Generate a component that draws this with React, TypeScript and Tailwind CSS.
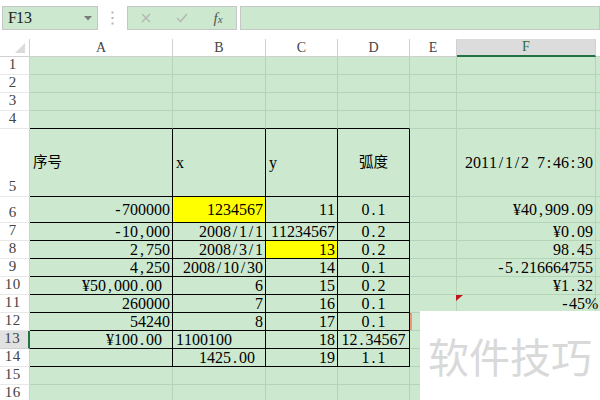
import React from 'react';

type Align = 'l' | 'r' | 'c';
interface ICell {
    t?: string;
    a?: Align;
    y?: boolean;
    pad?: boolean;
    zh?: boolean;
    note?: boolean;
    mark?: boolean;
}
interface IRow {
    n: number;
    h: string;
    cells: ICell[];
    sel?: boolean;
}

// SimSun-like look: serif glyphs in fixed 8px slots
const serif = "[font-family:'Liberation_Serif','Noto_Sans_CJK_SC',serif]";
const colW = ['w-[143px]', 'w-[93px]', 'w-[72px]', 'w-[72px]', 'w-[47px]', 'w-[139px]'];
const letters = ['A', 'B', 'C', 'D', 'E', 'F'];

const rows: IRow[] = [
    { n: 1, h: 'h-[18px]', cells: [] },
    { n: 2, h: 'h-[18px]', cells: [] },
    { n: 3, h: 'h-[18px]', cells: [] },
    { n: 4, h: 'h-[18px]', cells: [] },
    {
        n: 5,
        h: 'h-[68px]',
        cells: [
            { t: '序号', a: 'l', zh: true },
            { t: 'x', a: 'l' },
            { t: 'y', a: 'l' },
            { t: '弧度', a: 'c', zh: true },
            {},
            { t: '2011/1/2 7:46:30', a: 'r' },
        ],
    },
    {
        n: 6,
        h: 'h-[26px]',
        cells: [{ t: '-700000' }, { t: '1234567', y: true }, { t: '11' }, { t: '0.1', a: 'c' }, {}, { t: '¥40,909.09' }],
    },
    {
        n: 7,
        h: 'h-[18px]',
        cells: [{ t: '-10,000' }, { t: '2008/1/1' }, { t: '11234567' }, { t: '0.2', a: 'c' }, {}, { t: '¥0.09' }],
    },
    {
        n: 8,
        h: 'h-[18px]',
        cells: [{ t: '2,750' }, { t: '2008/3/1' }, { t: '13', y: true }, { t: '0.2', a: 'c' }, {}, { t: '98.45' }],
    },
    {
        n: 9,
        h: 'h-[18px]',
        cells: [{ t: '4,250' }, { t: '2008/10/30' }, { t: '14' }, { t: '0.1', a: 'c' }, {}, { t: '-5.216664755' }],
    },
    {
        n: 10,
        h: 'h-[18px]',
        cells: [{ t: '¥50,000.00', pad: true }, { t: '6' }, { t: '15' }, { t: '0.2', a: 'c' }, {}, { t: '¥1.32' }],
    },
    {
        n: 11,
        h: 'h-[18px]',
        cells: [{ t: '260000' }, { t: '7' }, { t: '16' }, { t: '0.1', a: 'c' }, {}, { t: '-45%', note: true }],
    },
    {
        n: 12,
        h: 'h-[18px]',
        cells: [{ t: '54240' }, { t: '8' }, { t: '17' }, { t: '0.1', a: 'c' }, { mark: true }, {}],
    },
    {
        n: 13,
        h: 'h-[18px]',
        sel: true,
        cells: [{ t: '¥100.00', pad: true }, { t: '1100100', a: 'l' }, { t: '18' }, { t: '12.34567', a: 'c' }, {}, {}],
    },
    {
        n: 14,
        h: 'h-[18px]',
        cells: [{}, { t: '1425.00', pad: true }, { t: '19' }, { t: '1.1', a: 'c' }, {}, {}],
    },
    { n: 15, h: 'h-[18px]', cells: [] },
    { n: 16, h: 'h-[18px]', cells: [] },
];

function Mono({ t }: { t: string }) {
    return (
        <span className="inline-flex">
            {t.split('').map((ch, i) => (
                <span key={i} className="inline-block w-[8px] text-center">
                    {ch === ' ' ? '\u00a0' : ch}
                </span>
            ))}
        </span>
    );
}

function Cell({ c, idx, rowNum }: { c: ICell; idx: number; rowNum: number }) {
    const inTable = idx < 4 && rowNum >= 5 && rowNum <= 14;
    const topEdge = idx < 4 && rowNum === 4;
    const right = inTable ? 'border-r-black' : 'border-r-[#b3d4b7]';
    const bottom = inTable || topEdge ? 'border-b-black' : 'border-b-[#b3d4b7]';
    let align = 'justify-end pr-[2px]';
    if (c.a === 'l') align = 'justify-start pl-[3px]';
    if (c.a === 'c') align = 'justify-center';
    if (c.pad) align = 'justify-end pr-[10px]';
    return (
        <div
            className={`${colW[idx]} relative h-full shrink-0 border-r border-b ${right} ${bottom} ${
                c.y ? 'bg-[#ffff00]' : ''
            } flex items-center ${align} whitespace-nowrap`}
        >
            {c.t && (c.zh ? <span className="text-[14.5px]">{c.t}</span> : <Mono t={c.t} />)}
            {c.note && (
                <svg className="absolute left-[-1px] top-0" width="7" height="7" viewBox="0 0 7 7">
                    <polygon points="0,0 7,0 0,6" fill="#c0161b" />
                </svg>
            )}
            {c.mark && <div className="absolute left-0 top-0 h-[17px] w-[2px] bg-[#f29477]" />}
        </div>
    );
}

function Toolbar() {
    return (
        <div className="flex h-[39px] items-start bg-white pl-[2px] pt-[6px]">
            <div className="flex h-[24px] w-[100px] items-center justify-between border border-[#c6c6c6] bg-[#cce8cf] pl-[5px] pr-[5px] text-[#222]">
                <Mono t="F13" />
                <svg width="8" height="5" viewBox="0 0 8 5">
                    <polygon points="0,0 8,0 4,4.5" fill="#7a7a7a" />
                </svg>
            </div>
            <div className="flex h-[24px] w-[31px] items-center justify-center">
                <svg width="3" height="14" viewBox="0 0 3 14">
                    <rect x="0.5" y="0.5" width="2" height="2" fill="#b5b5b5" />
                    <rect x="0.5" y="6" width="2" height="2" fill="#b5b5b5" />
                    <rect x="0.5" y="11.5" width="2" height="2" fill="#b5b5b5" />
                </svg>
            </div>
            <div className="flex h-[24px] w-[110px] items-center border border-[#c6c6c6] bg-[#cce8cf]">
                <div className="flex w-[36px] justify-center">
                    <svg width="10" height="10" viewBox="0 0 10 10">
                        <path d="M1 1 L9 9 M9 1 L1 9" stroke="#b3b3b3" strokeWidth="1.3" />
                    </svg>
                </div>
                <div className="flex w-[36px] justify-center">
                    <svg width="12" height="10" viewBox="0 0 12 10">
                        <path d="M1 5 L4.5 8.5 L11 1" stroke="#b3b3b3" strokeWidth="1.3" fill="none" />
                    </svg>
                </div>
                <div className="flex w-[36px] justify-center text-[15px] italic text-[#555]">
                    <span>
                        f<span className="text-[11px]">x</span>
                    </span>
                </div>
            </div>
            <div className="ml-[3px] h-[24px] w-[360px] shrink-0 border border-[#c6c6c6] bg-[#cce8cf]" />
        </div>
    );
}

function Header() {
    return (
        <div className="flex h-[18px] bg-white text-[14px] text-[#444]">
            <div className="relative h-full w-[30px] shrink-0 border-r border-b border-[#d0d0d0]">
                <svg className="absolute left-[15px] top-[4px]" width="10" height="10" viewBox="0 0 10 10">
                    <polygon points="10,0 10,10 0,10" fill="#dadada" />
                </svg>
            </div>
            {letters.map((l, i) =>
                l === 'F' ? (
                    <div
                        key={l}
                        className={`${colW[i]} flex h-full shrink-0 items-center justify-center border-r border-b-2 border-r-[#d0d0d0] border-b-[#217346] bg-[#dcdcdc] text-[#2e6b45]`}
                    >
                        {l}
                    </div>
                ) : (
                    <div
                        key={l}
                        className={`${colW[i]} flex h-full shrink-0 items-center justify-center border-r border-b border-[#d0d0d0]`}
                    >
                        {l}
                    </div>
                )
            )}
            <div className="h-full flex-1 border-b border-[#d0d0d0]" />
        </div>
    );
}

export default function App() {
    return (
        <div className={`relative h-[400px] w-[600px] overflow-hidden bg-white text-[16px] leading-none text-black ${serif}`}>
            <Toolbar />
            <Header />
            {rows.map((r) => (
                <div key={r.n} className={`flex ${r.h}`}>
                    <div
                        className={`flex h-full w-[30px] shrink-0 items-end justify-center pb-[2px] pr-[4px] text-[15px] text-[#444] ${
                            r.sel
                                ? 'border-r-2 border-b border-r-[#217346] border-b-[#d0d0d0] bg-[#e1e1e1]'
                                : 'border-r border-b border-r-[#d0d0d0] border-b-[#e8e8e8] bg-white'
                        }`}
                    >
                        <Mono t={String(r.n)} />
                    </div>
                    <div className="flex h-full flex-1 bg-[#cce8cf]">
                        {colW.map((_, i) => (
                            <Cell key={i} c={r.cells[i] ?? {}} idx={i} rowNum={r.n} />
                        ))}
                        <div className="h-full flex-1 border-b border-b-[#b3d4b7]" />
                    </div>
                </div>
            ))}
            <div className="absolute left-[420px] top-[311px] flex h-[89px] w-[180px] items-center justify-center bg-white text-[41px] text-[#d9d9d9] [font-family:'Noto_Sans_CJK_SC',sans-serif]">
                软件技巧
            </div>
        </div>
    );
}
